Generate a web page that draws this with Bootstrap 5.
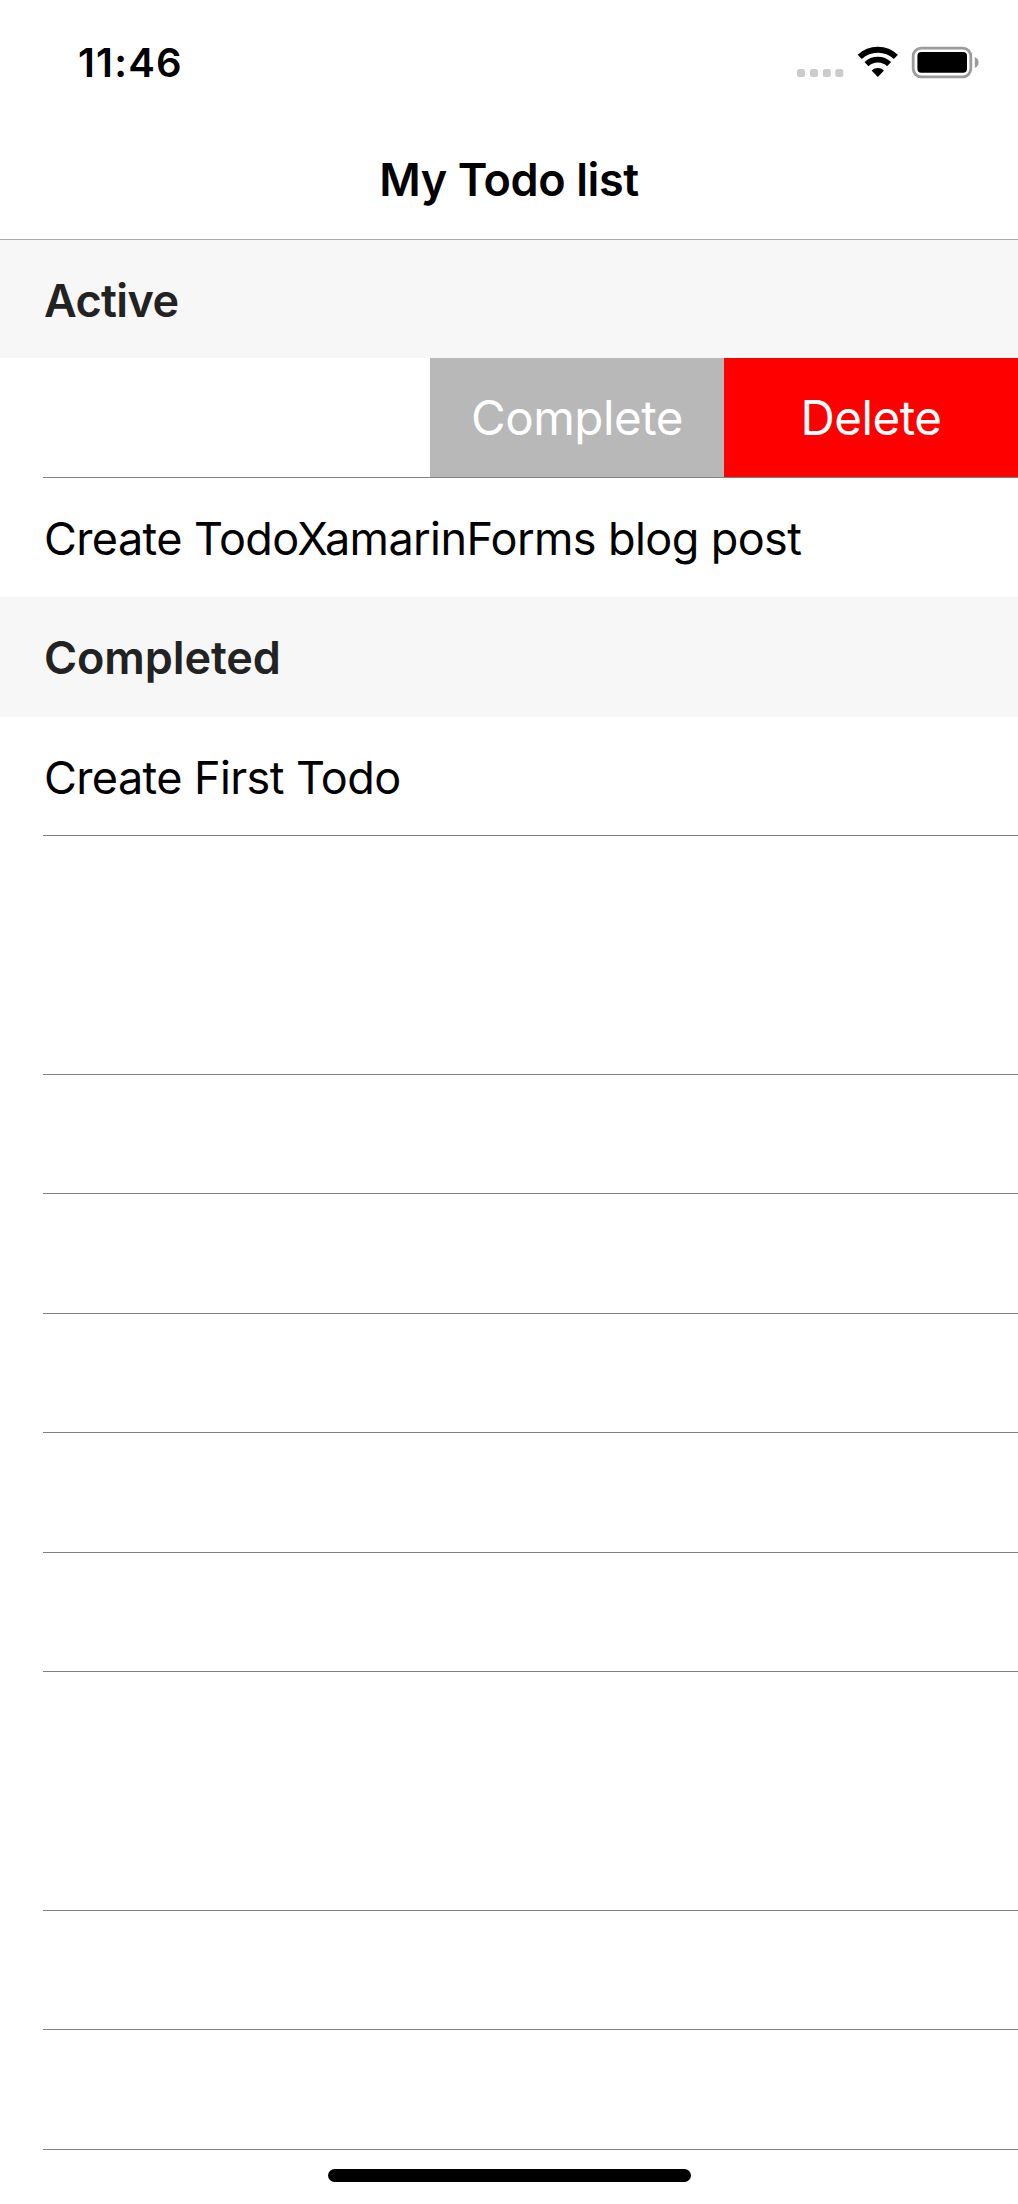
<!DOCTYPE html>
<html lang="en">
<head>
<meta charset="utf-8">
<meta name="viewport" content="width=device-width, initial-scale=1">
<title>My Todo list</title>
<link href="https://cdn.jsdelivr.net/npm/bootstrap@5.3.0/dist/css/bootstrap.min.css" rel="stylesheet">
<style>
body { font-family: Inter, "Liberation Sans", sans-serif; color: #000; background: #fff; }
.phone { width: 1018px; height: 2204px; }
.statusbar { height: 120px; padding: 0 38px 0 78px; }
.clock { font-size: 40px; line-height: 1; font-weight: 600; letter-spacing: 1.2px; margin-top: 43px; }
.indicators { margin-top: 44px; }
.titlebar { height: 118.83px; }
.titlebar h1 { font-size: 45px; line-height: 1; font-weight: 600; letter-spacing: -.4px; }
.todo-row { height: 119.4375px; flex: none; font-size: 45px; line-height: 1; letter-spacing: -.6px; }
.section-head { background: #f7f7f7; color: #222; font-weight: 600; padding: 2px 0 0 44px; letter-spacing: -.1px; }
.section-head.first { border-top: 1px solid #acacac; letter-spacing: -.6px; }
.todo-cell { padding-left: 43px; }
.todo-cell > div { border-bottom: 1px solid #808080; padding: 3px 0 0 1px; }
.todo-cell.no-line > div { border-bottom-color: transparent; }
.swiped { border-bottom: 1px solid #808080; margin-left: 43px; }
.swipe { width: 294px; height: 100%; padding: 0; border: 0; color: #fff; font-size: 47.5px; line-height: 1; letter-spacing: -.5px; border-radius: 0; }
.swipe-complete, .swipe-complete:hover { background: #b8b8b8; color: #fff; }
.swipe-delete, .swipe-delete:hover { background: #f00; color: #fff; }
.home-bar { width: 363px; height: 13px; border-radius: 6.5px; background: #000; bottom: 22px; left: 328px; }
</style>
<script src="https://cdn.jsdelivr.net/npm/bootstrap@5.3.0/dist/js/bootstrap.bundle.min.js"></script>
</head>
<body>
<main class="phone position-relative overflow-hidden d-flex flex-column">
  <header class="flex-shrink-0">
    <div class="statusbar d-flex justify-content-between align-items-start">
      <span class="clock">11:46</span>
      <svg class="indicators" width="186" height="36" viewBox="0 0 186 36" aria-hidden="true">
        <g fill="#cbcbcb"><rect x="3" y="25" width="8" height="8" rx="2.5"/><rect x="16" y="25" width="8" height="8" rx="2.5"/><rect x="28.8" y="25" width="8" height="8" rx="2.5"/><rect x="41.3" y="25" width="8" height="8" rx="2.5"/></g>
        <g fill="none" stroke="#000"><path stroke-width="6" d="M65.7 12.9A26.3 26.3 0 0 1 101.9 12.9"/><path stroke-width="5.8" d="M72.5 20.1A16.4 16.4 0 0 1 95.1 20.1"/></g>
        <path d="M83.8 33L77.6 26.4A9 9 0 0 1 90 26.4Z"/>
        <rect x="119.2" y="4.2" width="57.6" height="28.6" rx="8" fill="none" stroke="#9b9b9b" stroke-width="2.8"/>
        <rect x="123.4" y="8" width="49.6" height="20.8" rx="4"/>
        <path fill="#9b9b9b" d="M180.8 13Q184.6 14.6 184.6 18.5T180.8 24Z"/>
      </svg>
    </div>
    <div class="titlebar d-flex align-items-center justify-content-center"><h1 class="m-0">My Todo list</h1></div>
  </header>
  <h2 class="todo-row section-head first m-0 d-flex align-items-center">Active</h2>
  <div class="todo-row swiped d-flex justify-content-end">
    <button type="button" class="btn swipe swipe-complete">Complete</button>
    <button type="button" class="btn swipe swipe-delete">Delete</button>
  </div>
  <div class="todo-row todo-cell no-line"><div class="h-100 d-flex align-items-center">Create TodoXamarinForms blog post</div></div>
  <h2 class="todo-row section-head m-0 d-flex align-items-center">Completed</h2>
  <div class="todo-row todo-cell"><div class="h-100 d-flex align-items-center">Create First Todo</div></div>
  <div class="todo-row todo-cell no-line"><div class="h-100"></div></div>
  <div class="todo-row todo-cell"><div class="h-100"></div></div>
  <div class="todo-row todo-cell"><div class="h-100"></div></div>
  <div class="todo-row todo-cell"><div class="h-100"></div></div>
  <div class="todo-row todo-cell"><div class="h-100"></div></div>
  <div class="todo-row todo-cell"><div class="h-100"></div></div>
  <div class="todo-row todo-cell"><div class="h-100"></div></div>
  <div class="todo-row todo-cell no-line"><div class="h-100"></div></div>
  <div class="todo-row todo-cell"><div class="h-100"></div></div>
  <div class="todo-row todo-cell"><div class="h-100"></div></div>
  <div class="todo-row todo-cell"><div class="h-100"></div></div>
  <div class="home-bar position-absolute"></div>
</main>
</body>
</html>
